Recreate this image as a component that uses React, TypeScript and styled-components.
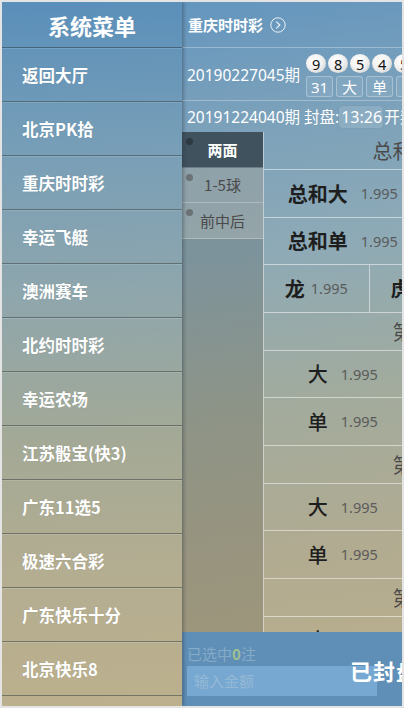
import React from "react";
import styled, { createGlobalStyle } from "styled-components";

const GlobalStyle = createGlobalStyle`
  html, body { margin: 0; padding: 0; background: #e4e4e4; }
  body { font-family: "Noto Sans", "Noto Sans CJK SC", sans-serif; }
  * { box-sizing: border-box; }
`;

const Frame = styled.div`
  width: 400px;
  height: 704px;
  margin: 2px;
  overflow: hidden;
  display: flex;
  background: linear-gradient(172deg, #5f93bf 0%, #79a0bb 18%, #8eaab6 38%, #a2ab9d 58%, #b1ab91 78%, #bcb08c 100%);
`;

const Sidebar = styled.nav`
  width: 180px;
  flex-shrink: 0;
  display: flex;
  flex-direction: column;
  position: relative;
  z-index: 2;
  background: linear-gradient(178deg, #5a8fba 0%, #799fb7 22%, #8fa6ac 42%, #a3a996 62%, #b3ad91 80%, #bcb08d 100%);
  box-shadow: 2px 0 3px rgba(40, 50, 60, 0.35);
`;

const MenuTitle = styled.div`
  height: 46px;
  flex-shrink: 0;
  display: flex;
  align-items: center;
  justify-content: center;
  color: #fff;
  font-family: "Noto Sans CJK SC", sans-serif;
  font-weight: 700;
  font-size: 22px;
  border-bottom: 1px solid rgba(50, 70, 85, 0.6);
`;

const MenuItem = styled.div`
  height: 54px;
  flex-shrink: 0;
  display: flex;
  align-items: center;
  padding-left: 20px;
  color: #fff;
  font-family: "Noto Sans CJK SC", sans-serif;
  font-weight: 700;
  font-size: 16.5px;
  border-top: 1px solid rgba(255, 255, 255, 0.12);
  border-bottom: 1px solid rgba(60, 70, 70, 0.55);
  text-shadow: 0 0 1px rgba(0, 0, 0, 0.15);
`;

const Main = styled.main`
  width: 400px;
  flex-shrink: 0;
  display: flex;
  flex-direction: column;
  height: 704px;
`;

const TitleBar = styled.div`
  height: 46px;
  flex-shrink: 0;
  display: flex;
  align-items: center;
  gap: 7px;
  padding-left: 6px;
  color: #fff;
  font-family: "Noto Sans CJK SC", sans-serif;
  font-weight: 700;
  font-size: 15px;
  border-bottom: 1px solid rgba(255, 255, 255, 0.3);
`;

const IssueRow = styled.div`
  height: 53px;
  flex-shrink: 0;
  display: flex;
  align-items: center;
  padding-left: 5px;
  gap: 6px;
  color: #fff;
  font-size: 15.5px;
  white-space: nowrap;
  border-bottom: 1px solid rgba(255, 255, 255, 0.3);
`;

const Draw = styled.div`
  display: flex;
  flex-direction: column;
  gap: 3px;
  padding-top: 3px;
`;

const BallLine = styled.div`
  display: flex;
  gap: 2px;
`;

const Ball = styled.span`
  width: 20px;
  height: 19px;
  border-radius: 50%;
  display: flex;
  align-items: center;
  justify-content: center;
  flex-shrink: 0;
  background: radial-gradient(circle at 40% 35%, #ffffff 0%, #f2f2f2 45%, #c9c9c9 100%);
  color: #111;
  font-size: 14.5px;
`;

const TagLine = styled.div`
  display: flex;
  gap: 3px;
`;

const Tag = styled.span`
  width: 27px;
  height: 21px;
  flex-shrink: 0;
  display: flex;
  align-items: center;
  justify-content: center;
  border: 1px solid rgba(255, 255, 255, 0.3);
  border-radius: 3px;
  background: rgba(255, 255, 255, 0.08);
  color: #fff;
  font-size: 15px;
`;

const CountRow = styled.div`
  height: 31px;
  flex-shrink: 0;
  display: flex;
  align-items: center;
  padding-left: 5px;
  color: #fff;
  font-size: 15.5px;
  white-space: nowrap;
`;

const Timer = styled.span`
  display: inline-flex;
  align-items: center;
  height: 22px;
  padding: 0 1px 0 2px;
  margin-right: 1px;
  border-radius: 3px;
  background: rgba(255, 255, 255, 0.12);
  box-shadow: 0 0 1px rgba(60, 80, 100, 0.4);
  font-size: 16px;
`;

const Body = styled.div`
  flex: 1;
  display: flex;
  min-height: 0;
  overflow: hidden;
`;

const TabCol = styled.div`
  width: 82px;
  flex-shrink: 0;
  display: flex;
  flex-direction: column;
  background: rgba(70, 70, 60, 0.22);
  border-right: 1px solid rgba(255, 255, 255, 0.55);
`;

const Tab = styled.div<{ $active?: boolean }>`
  height: 35.5px;
  position: relative;
  display: flex;
  align-items: center;
  justify-content: center;
  font-family: "Noto Sans CJK SC", sans-serif;
  font-size: 15px;
  font-weight: ${(p) => (p.$active ? 700 : 400)};
  color: ${(p) => (p.$active ? "#fff" : "#4a4a4a")};
  background: ${(p) => (p.$active ? "rgba(55, 72, 82, 0.85)" : "rgba(205, 205, 200, 0.3)")};
  border-bottom: 1px solid rgba(255, 255, 255, 0.25);
  &::before {
    content: "";
    position: absolute;
    left: 4px;
    top: 6px;
    width: 7px;
    height: 7px;
    border-radius: 50%;
    background: ${(p) => (p.$active ? "#2e3a42" : "#6a7275")};
  }
`;

const Table = styled.div`
  width: 317px;
  flex-shrink: 0;
  display: flex;
  flex-direction: column;
`;

const SectionHead = styled.div`
  height: 38px;
  flex-shrink: 0;
  display: flex;
  align-items: center;
  justify-content: center;
  font-family: "Noto Sans CJK SC", sans-serif;
  font-size: 20px;
  color: #4a4a4a;
  border-bottom: 1px solid rgba(255, 255, 255, 0.5);
`;

const Row = styled.div<{ $cols: number }>`
  height: 47.5px;
  flex-shrink: 0;
  display: grid;
  grid-template-columns: repeat(${(p) => p.$cols}, 1fr);
  border-bottom: 1px solid rgba(255, 255, 255, 0.5);
`;

const Cell = styled.div<{ $gap: number }>`
  display: flex;
  align-items: center;
  justify-content: center;
  gap: ${(p) => p.$gap}px;
  border-right: 1px solid rgba(255, 255, 255, 0.5);
  &:last-child { border-right: none; }
`;

const Label = styled.span<{ $bold?: boolean }>`
  font-family: "Noto Sans CJK SC", sans-serif;
  font-size: 20px;
  font-weight: ${(p) => (p.$bold ? 700 : 500)};
  color: #1e1e1e;
`;

const Odds = styled.span`
  font-size: 14.5px;
  color: #5a5a5a;
`;

const BottomBar = styled.div`
  height: 74px;
  flex-shrink: 0;
  display: flex;
  align-items: center;
  background: #5f8fb7;
  padding-left: 5px;
`;

const BetBox = styled.div`
  display: flex;
  flex-direction: column;
  gap: 3px;
  width: 190px;
  flex-shrink: 0;
  margin-top: 2px;
`;

const Picked = styled.div`
  font-family: "Noto Sans CJK SC", sans-serif;
  font-size: 15px;
  color: #86abc7;
  line-height: 18px;
  & b { font-weight: 700; color: #9fc092; }
`;

const Amount = styled.input`
  width: 190px;
  height: 30px;
  border: none;
  outline: none;
  background: #77a8d2;
  padding: 0 7px;
  font-family: "Noto Sans CJK SC", sans-serif;
  font-size: 15px;
  color: #fff;
  &::placeholder { color: #95b8d5; }
`;

const Closed = styled.div`
  margin-left: -27px;
  margin-top: 2px;
  font-family: "Noto Sans CJK SC", sans-serif;
  font-weight: 700;
  font-size: 22px;
  color: #fff;
  letter-spacing: 1px;
`;

const menu = ["返回大厅", "北京PK拾", "重庆时时彩", "幸运飞艇", "澳洲赛车", "北约时时彩", "幸运农场", "江苏骰宝(快3)", "广东11选5", "极速六合彩", "广东快乐十分", "北京快乐8"];

const Chevron = () => (
  <svg width="16" height="16" viewBox="0 0 16 16" fill="none">
    <circle cx="8" cy="8" r="7.2" stroke="#fff" strokeOpacity="0.85" strokeWidth="1" />
    <path d="M6.6 4.8 L9.8 8 L6.6 11.2" stroke="#fff" strokeOpacity="0.85" strokeWidth="1.2" strokeLinecap="round" strokeLinejoin="round" />
  </svg>
);

type RowData = { cols: number; items: string[]; bold?: boolean };
const sections: { title: string; rows: RowData[] }[] = [
  { title: "总和、龙虎", rows: [
    { cols: 2, items: ["总和大", "总和小"], bold: true },
    { cols: 2, items: ["总和单", "总和双"], bold: true },
    { cols: 3, items: ["龙", "虎", "和"], bold: true },
  ] },
  { title: "第一球", rows: [{ cols: 2, items: ["大", "小"] }, { cols: 2, items: ["单", "双"] }] },
  { title: "第二球", rows: [{ cols: 2, items: ["大", "小"] }, { cols: 2, items: ["单", "双"] }] },
  { title: "第三球", rows: [{ cols: 2, items: ["大", "小"] }, { cols: 2, items: ["单", "双"] }] },
];

export default function App() {
  return (
    <>
      <GlobalStyle />
      <Frame>
        <Sidebar>
          <MenuTitle>系统菜单</MenuTitle>
          {menu.map((m) => (
            <MenuItem key={m}>{m}</MenuItem>
          ))}
        </Sidebar>
        <Main>
          <TitleBar>
            重庆时时彩 <Chevron />
          </TitleBar>
          <IssueRow>
            <span>20190227045期</span>
            <Draw>
              <BallLine>
                {[9, 8, 5, 4, 5].map((n, i) => (
                  <Ball key={i}>{n}</Ball>
                ))}
              </BallLine>
              <TagLine>
                {["31", "大", "单", "龙"].map((t) => (
                  <Tag key={t}>{t}</Tag>
                ))}
              </TagLine>
            </Draw>
          </IssueRow>
          <CountRow>
            20191224040期 封盘:<Timer>13:26</Timer>开奖:13:36
          </CountRow>
          <Body>
            <TabCol>
              <Tab $active>两面</Tab>
              <Tab>1-5球</Tab>
              <Tab>前中后</Tab>
            </TabCol>
            <Table>
              {sections.map((s) => (
                <React.Fragment key={s.title}>
                  <SectionHead>{s.title}</SectionHead>
                  {s.rows.map((r, i) => (
                    <Row key={i} $cols={r.cols}>
                      {r.items.map((it) => (
                        <Cell key={it} $gap={r.cols === 3 ? 6 : 13}>
                          <Label $bold={r.bold}>{it}</Label>
                          <Odds>1.995</Odds>
                        </Cell>
                      ))}
                    </Row>
                  ))}
                </React.Fragment>
              ))}
            </Table>
          </Body>
          <BottomBar>
            <BetBox>
              <Picked>已选中<b>0</b>注</Picked>
              <Amount placeholder="输入金额" />
            </BetBox>
            <Closed>已封盘</Closed>
          </BottomBar>
        </Main>
      </Frame>
    </>
  );
}
